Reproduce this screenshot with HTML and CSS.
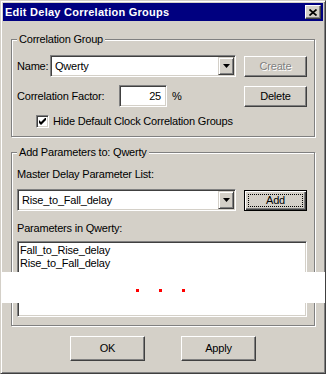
FILE: index.html
```html
<!DOCTYPE html>
<html lang="en">
<head>
    <meta charset="UTF-8">
    <title>Edit Delay Correlation Groups</title>
    <link rel="stylesheet" href="styles.css">
</head>
<body>
    <div class="window">
        <div class="titlebar">
            <span class="title">Edit Delay Correlation Groups</span>
            <span class="close-btn">
                <svg width="8" height="7" viewBox="0 0 8 7"><path d="M0.5 0.5 L7.5 6.5 M7.5 0.5 L0.5 6.5" stroke="#000" stroke-width="1.7" fill="none"/></svg>
            </span>
        </div>

        <div class="dialog-body">
            <!-- Correlation group -->
            <div class="group group-correlation">
                <div class="group-title">Correlation Group</div>
                <div class="row row-name">
                    <span class="label label-name">Name:</span>
                    <div class="combo combo-name">
                        <span class="combo-text">Qwerty</span>
                        <span class="combo-arrow">
                            <svg width="7" height="4" viewBox="0 0 7 4"><path d="M0 0h7l-3.5 4z" fill="#000"/></svg>
                        </span>
                    </div>
                    <button class="btn btn-side" disabled>Create</button>
                </div>
                <div class="row row-factor">
                    <span class="label label-factor">Correlation Factor:</span>
                    <div class="textbox">25</div>
                    <span class="unit">%</span>
                    <button class="btn btn-side">Delete</button>
                </div>
                <div class="row row-check">
                    <span class="checkbox">
                        <svg width="7" height="7" viewBox="0 0 7 7"><path d="M0 2 L2 4 L7 -1 L7 2 L2 7 L0 5 Z" fill="#000"/></svg>
                    </span>
                    <span class="check-label">Hide Default Clock Correlation Groups</span>
                </div>
            </div>

            <!-- Parameters -->
            <div class="group group-params">
                <div class="group-title">Add Parameters to: Qwerty</div>
                <div class="caption caption-master">Master Delay Parameter List:</div>
                <div class="row row-master">
                    <div class="combo combo-master">
                        <span class="combo-text">Rise_to_Fall_delay</span>
                        <span class="combo-arrow">
                            <svg width="7" height="4" viewBox="0 0 7 4"><path d="M0 0h7l-3.5 4z" fill="#000"/></svg>
                        </span>
                    </div>
                    <button class="btn btn-side btn-default"><span class="focus-rect">Add</span></button>
                </div>
                <div class="caption caption-list">Parameters in Qwerty:</div>
                <div class="listbox">
                    <div class="list-item">Fall_to_Rise_delay</div>
                    <div class="list-item">Rise_to_Fall_delay</div>
                </div>
            </div>

            <div class="dialog-buttons">
                <button class="btn btn-bottom">OK</button>
                <button class="btn btn-bottom">Apply</button>
            </div>
        </div>

        <!-- torn strip across the capture -->
        <div class="tear">
            <i class="dot"></i>
            <i class="dot"></i>
            <i class="dot"></i>
        </div>
    </div>
</body>
</html>
```

FILE: styles.css
```css
body {
    margin: 0;
    font-family: "Liberation Sans", Arial, sans-serif;
    font-size: 11px;
    line-height: 13px;
    letter-spacing: -0.2px;
    color: #000;
    background: #d4d0c8;
}

.window {
    position: relative;
    width: 326px;
    height: 374px;
    box-sizing: border-box;
    border: 1px solid;
    border-color: #d4d0c8 #404040 #404040 #d4d0c8;
    box-shadow: inset 1px 1px #fff, inset -1px -1px #808080;
    padding: 2px;
    background: #d4d0c8;
    overflow: hidden;
}

.titlebar {
    height: 18px;
    background: #000080;
    display: flex;
    align-items: center;
    justify-content: space-between;
    padding: 0 2px 0 2px;
}

.title {
    color: #fff;
    font-weight: bold;
    letter-spacing: 0.25px;
}

.close-btn {
    width: 14px;
    height: 12px;
    background: #d4d0c8;
    border: 1px solid;
    border-color: #fff #404040 #404040 #fff;
    box-shadow: inset -1px -1px #808080;
    display: flex;
    align-items: center;
    justify-content: center;
}

.dialog-body {
    display: flex;
    flex-direction: column;
    padding: 0 8px;
}

.group {
    display: flex;
    flex-direction: column;
    border: 1px solid #808080;
    box-shadow: inset 1px 1px #fff, 1px 1px #fff;
    padding: 0 7px 8px 5px;
}

.group-correlation {
    margin-top: 18px;
}

.group-params {
    margin-top: 15px;
}

.group-title {
    align-self: flex-start;
    margin-top: -7px;
    padding: 0 2px;
    background: #d4d0c8;
}

.row {
    display: flex;
    align-items: center;
}

.row-name {
    margin-top: 9px;
    height: 22px;
}

.row-factor {
    margin-top: 8px;
    height: 22px;
}

.row-check {
    margin-top: 8px;
    height: 13px;
    padding-left: 19px;
}

.label-name {
    width: 33px;
}

.label-factor {
    width: 102px;
}

.combo {
    box-sizing: border-box;
    height: 22px;
    display: flex;
    align-items: center;
    background: #fff;
    border: 1px solid;
    border-color: #808080 #fff #fff #808080;
    box-shadow: inset 1px 1px #404040, inset -1px -1px #d4d0c8;
    padding: 1px;
}

.combo-name {
    width: 186px;
}

.combo-master {
    width: 219px;
}

.combo-text {
    flex: 1;
    padding-left: 3px;
}

.combo-arrow {
    box-sizing: border-box;
    width: 16px;
    height: 18px;
    background: #d4d0c8;
    border: 1px solid;
    border-color: #d4d0c8 #404040 #404040 #d4d0c8;
    box-shadow: inset 1px 1px #fff, inset -1px -1px #808080;
    display: flex;
    align-items: center;
    justify-content: center;
}

.textbox {
    box-sizing: border-box;
    width: 48px;
    height: 22px;
    background: #fff;
    border: 1px solid;
    border-color: #808080 #fff #fff #808080;
    box-shadow: inset 1px 1px #404040, inset -1px -1px #d4d0c8;
    text-align: right;
    padding: 4px 5px 0 0;
}

.unit {
    margin-left: 5px;
}

.checkbox {
    box-sizing: border-box;
    width: 13px;
    height: 13px;
    background: #fff;
    border: 1px solid;
    border-color: #808080 #fff #fff #808080;
    box-shadow: inset 1px 1px #404040, inset -1px -1px #d4d0c8;
    display: flex;
    align-items: center;
    justify-content: center;
}

.check-label {
    margin-left: 4px;
}

.btn {
    box-sizing: border-box;
    font: inherit;
    letter-spacing: inherit;
    color: #000;
    background: #d4d0c8;
    border: 1px solid;
    border-color: #fff #404040 #404040 #fff;
    box-shadow: inset -1px -1px #808080;
    padding: 0;
}

.btn:disabled {
    color: #808080;
    text-shadow: 1px 1px #fff;
}

.btn-side {
    width: 63px;
    height: 21px;
    margin-left: auto;
}

.btn-default {
    display: flex;
    padding: 3px;
    border-color: #000;
    box-shadow: inset 1px 1px #fff, inset -1px -1px #404040, inset -2px -2px #808080;
}

.focus-rect {
    flex: 1;
    border: 1px dotted #000;
    display: flex;
    align-items: center;
    justify-content: center;
}

.caption-master {
    margin-top: 9px;
}

.row-master {
    margin-top: 8px;
    height: 22px;
}

.caption-list {
    margin-top: 11px;
}

.listbox {
    box-sizing: border-box;
    margin-top: 6px;
    height: 76px;
    background: #fff;
    border: 1px solid;
    border-color: #808080 #fff #fff #808080;
    box-shadow: inset 1px 1px #404040, inset -1px -1px #d4d0c8;
    padding: 2px 2px;
}

.dialog-buttons {
    display: flex;
    justify-content: center;
    gap: 36px;
    margin-top: 10px;
}

.btn-bottom {
    width: 75px;
    height: 25px;
}

.tear {
    position: absolute;
    left: 0;
    top: 271px;
    width: 326px;
    height: 31px;
    background: #fff;
    display: flex;
    gap: 20px;
    box-sizing: border-box;
    padding: 17px 0 0 135px;
}

.dot {
    width: 3px;
    height: 3px;
    background: #f00;
}
```
